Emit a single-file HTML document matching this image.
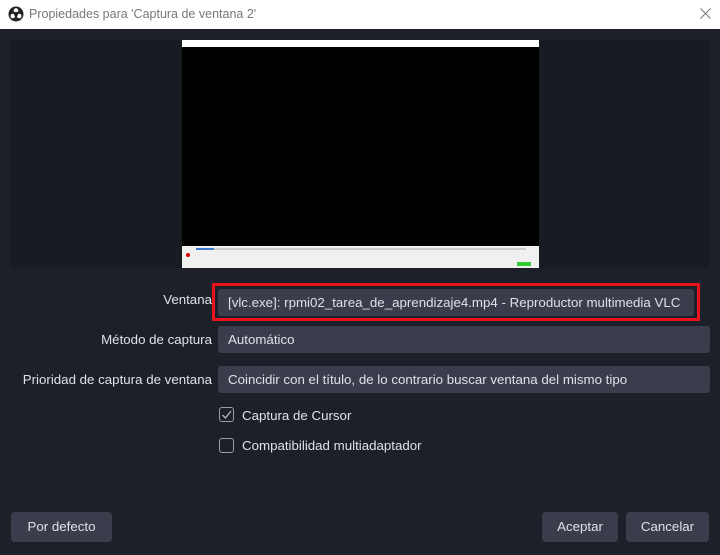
<!DOCTYPE html>
<html><head><meta charset="utf-8"><style>
*{margin:0;padding:0;box-sizing:border-box}
body{width:720px;height:555px;background:#1e2029;font-family:"Liberation Sans",sans-serif;font-size:13.3px;color:#dfe1e8;position:relative;overflow:hidden}
.abs{position:absolute}
.title{left:0;top:0;width:720px;height:29px;background:#fff;color:#777;font-size:12.5px}
.field{background:#3a3d4b;border-radius:3px;height:27px;line-height:27px;padding-left:10px;left:218px;width:492px;white-space:nowrap}
.lbl{right:508px;text-align:right;white-space:nowrap}
.btn{background:#3a3d4b;border-radius:4px;height:30px;line-height:30px;text-align:center}
.cb{width:15px;height:15px;border:1px solid #9a9ca6;border-radius:3px;left:219px}
</style></head><body>
<div class="abs title">
 <svg class="abs" style="left:8px;top:6px" width="16" height="16" viewBox="0 0 16 16"><circle cx="8" cy="8" r="7.5" fill="#222"/><circle cx="8" cy="4.5" r="2.3" fill="#fff"/><circle cx="4.8" cy="10" r="2.3" fill="#fff"/><circle cx="11.2" cy="10" r="2.3" fill="#fff"/><circle cx="8" cy="8" r="2.2" fill="#222"/></svg>
 <span class="abs" style="left:29px;top:7px">Propiedades para 'Captura de ventana 2'</span>
 <svg class="abs" style="left:700px;top:8px" width="11" height="11"><path d="M0.5 0.5L10.5 10.5M10.5 0.5L0.5 10.5" stroke="#777" stroke-width="1"/></svg>
</div>
<div class="abs" style="left:10px;top:40px;width:699px;height:228px;background:#191b22"></div>
<div class="abs" style="left:182px;top:40px;width:357px;height:228px;background:#000">
 <div class="abs" style="left:0;top:0;width:357px;height:7px;background:#fff"></div>
 <div class="abs" style="left:0;top:206px;width:357px;height:22px;background:#f0f0f0"></div>
 <div class="abs" style="left:14px;top:208px;width:330px;height:2px;background:#ccc"></div>
 <div class="abs" style="left:14px;top:208px;width:18px;height:2px;background:#3b7bd0"></div>
 <div class="abs" style="left:4px;top:213px;width:4px;height:4px;background:#d00;border-radius:2px"></div>
 <div class="abs" style="left:335px;top:222px;width:14px;height:4px;background:#3c3"></div>
</div>
<div class="abs" style="left:212px;top:283px;width:488px;height:38px;border:3px solid #e8141c"></div>
<div class="abs lbl" style="top:292px">Ventana</div>
<div class="abs field" style="top:289px;width:476px;left:218px">[vlc.exe]: rpmi02_tarea_de_aprendizaje4.mp4 - Reproductor multimedia VLC</div>
<div class="abs lbl" style="top:332px">Método de captura</div>
<div class="abs field" style="top:326px">Automático</div>
<div class="abs lbl" style="top:372px">Prioridad de captura de ventana</div>
<div class="abs field" style="top:366px">Coincidir con el título, de lo contrario buscar ventana del mismo tipo</div>
<div class="abs cb" style="top:407px"><svg width="13" height="13" style="position:absolute;left:0;top:0"><path d="M2.5 7L5.5 10L11 3" stroke="#b8bac2" stroke-width="1.3" fill="none"/></svg></div>
<div class="abs" style="left:242px;top:408px">Captura de Cursor</div>
<div class="abs cb" style="top:438px"></div>
<div class="abs" style="left:242px;top:438px">Compatibilidad multiadaptador</div>
<div class="abs btn" style="left:11px;top:512px;width:101px">Por defecto</div>
<div class="abs btn" style="left:542px;top:512px;width:76px">Aceptar</div>
<div class="abs btn" style="left:626px;top:512px;width:83px">Cancelar</div>
</body></html>
